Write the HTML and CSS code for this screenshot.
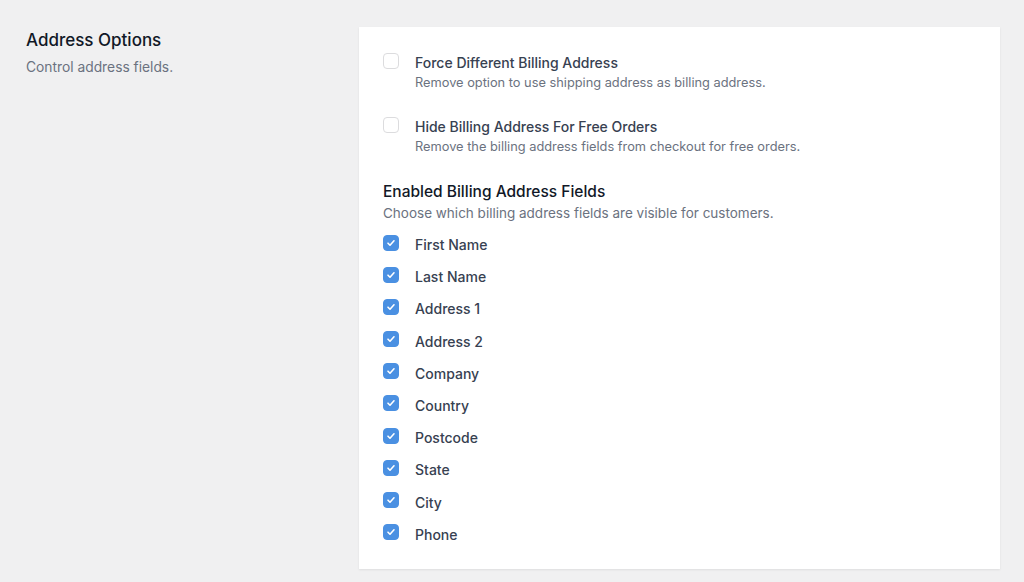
FILE: index.html
```html
<!DOCTYPE html>
<html lang="en">
<head>
    <meta charset="UTF-8">
    <title>Address Options</title>
    <link rel="stylesheet" href="styles.css">
</head>
<body>
    <div class="settings-row">
        <div class="section-info">
            <h2>Address Options</h2>
            <p>Control address fields.</p>
        </div>
        <div class="settings-card">
            <label class="option">
                <input type="checkbox">
                <span class="option-text">
                    <span class="option-title">Force Different Billing Address</span>
                    <span class="option-desc">Remove option to use shipping address as billing address.</span>
                </span>
            </label>
            <label class="option">
                <input type="checkbox">
                <span class="option-text">
                    <span class="option-title">Hide Billing Address For Free Orders</span>
                    <span class="option-desc">Remove the billing address fields from checkout for free orders.</span>
                </span>
            </label>

            <div class="fields-group">
                <h3>Enabled Billing Address Fields</h3>
                <p>Choose which billing address fields are visible for customers.</p>
                <ul class="field-list">
                    <li><label><input type="checkbox" checked><span>First Name</span></label></li>
                    <li><label><input type="checkbox" checked><span>Last Name</span></label></li>
                    <li><label><input type="checkbox" checked><span>Address 1</span></label></li>
                    <li><label><input type="checkbox" checked><span>Address 2</span></label></li>
                    <li><label><input type="checkbox" checked><span>Company</span></label></li>
                    <li><label><input type="checkbox" checked><span>Country</span></label></li>
                    <li><label><input type="checkbox" checked><span>Postcode</span></label></li>
                    <li><label><input type="checkbox" checked><span>State</span></label></li>
                    <li><label><input type="checkbox" checked><span>City</span></label></li>
                    <li><label><input type="checkbox" checked><span>Phone</span></label></li>
                </ul>
            </div>
        </div>
    </div>
</body>
</html>
```

FILE: styles.css
```css
/* 全局样式 */
:root {
    --page-bg: #f0f0f1;
    --card-bg: #ffffff;
    --heading-color: #111827;
    --text-color: #374151;
    --muted-color: #6b7280;
    --accent-color: #4a90e2;
    --border-color: #dcdcde;
}

* {
    margin: 0;
    padding: 0;
    box-sizing: border-box;
}

body {
    font-family: Inter, 'Noto Sans', Arial, sans-serif;
    background: var(--page-bg);
    color: var(--text-color);
    width: 1024px;
    height: 582px;
    overflow: hidden;
    padding: 27px 24px 0 26px;
}

.settings-row {
    display: grid;
    grid-template-columns: 333px 1fr;
}

/* 左侧说明 */
.section-info h2 {
    font-size: 17px;
    font-weight: 500;
    color: var(--heading-color);
    line-height: 26px;
}

.section-info p {
    font-size: 13.8px;
    color: var(--muted-color);
    line-height: 28px;
}

/* 卡片 */
.settings-card {
    background: var(--card-bg);
    box-shadow: 0 1px 2px rgba(0, 0, 0, 0.08);
    padding: 26px 24px 24px;
    height: 542px;
}

.option {
    display: flex;
    gap: 16px;
    margin-bottom: 25px;
}

.option-text {
    display: flex;
    flex-direction: column;
}

.option-title {
    font-size: 14px;
    font-weight: 500;
    color: var(--text-color);
    line-height: 20px;
}

.option-desc {
    font-size: 12.8px;
    color: var(--muted-color);
    line-height: 19px;
}

/* 复选框 */
input[type="checkbox"] {
    appearance: none;
    width: 16px;
    height: 16px;
    flex-shrink: 0;
    border: 1px solid var(--border-color);
    border-radius: 4px;
    background: white;
    margin-top: 0;
}

input[type="checkbox"]:checked {
    background: var(--accent-color) no-repeat center / 10px 10px;
    border-color: var(--accent-color);
    background-image: url("data:image/svg+xml,%3Csvg xmlns='http://www.w3.org/2000/svg' viewBox='0 0 10 10'%3E%3Cpath d='M2 5.2l2 2 4-4.4' fill='none' stroke='white' stroke-width='1.6' stroke-linecap='round' stroke-linejoin='round'/%3E%3C/svg%3E");
}

.fields-group {
    margin-top: 5px;
}

.fields-group h3 {
    font-size: 15.5px;
    font-weight: 500;
    color: var(--heading-color);
    line-height: 21px;
}

.fields-group p {
    font-size: 13.5px;
    color: var(--muted-color);
    line-height: 22px;
    margin-bottom: 11px;
}

.field-list {
    list-style: none;
}

.field-list li {
    height: 32.2px;
}

.field-list label {
    display: flex;
    align-items: center;
    gap: 16px;
}

.field-list span {
    font-size: 14px;
    font-weight: 500;
    line-height: 20px;
}

.field-list input[type="checkbox"] {
    margin-top: -5px;
}
```
